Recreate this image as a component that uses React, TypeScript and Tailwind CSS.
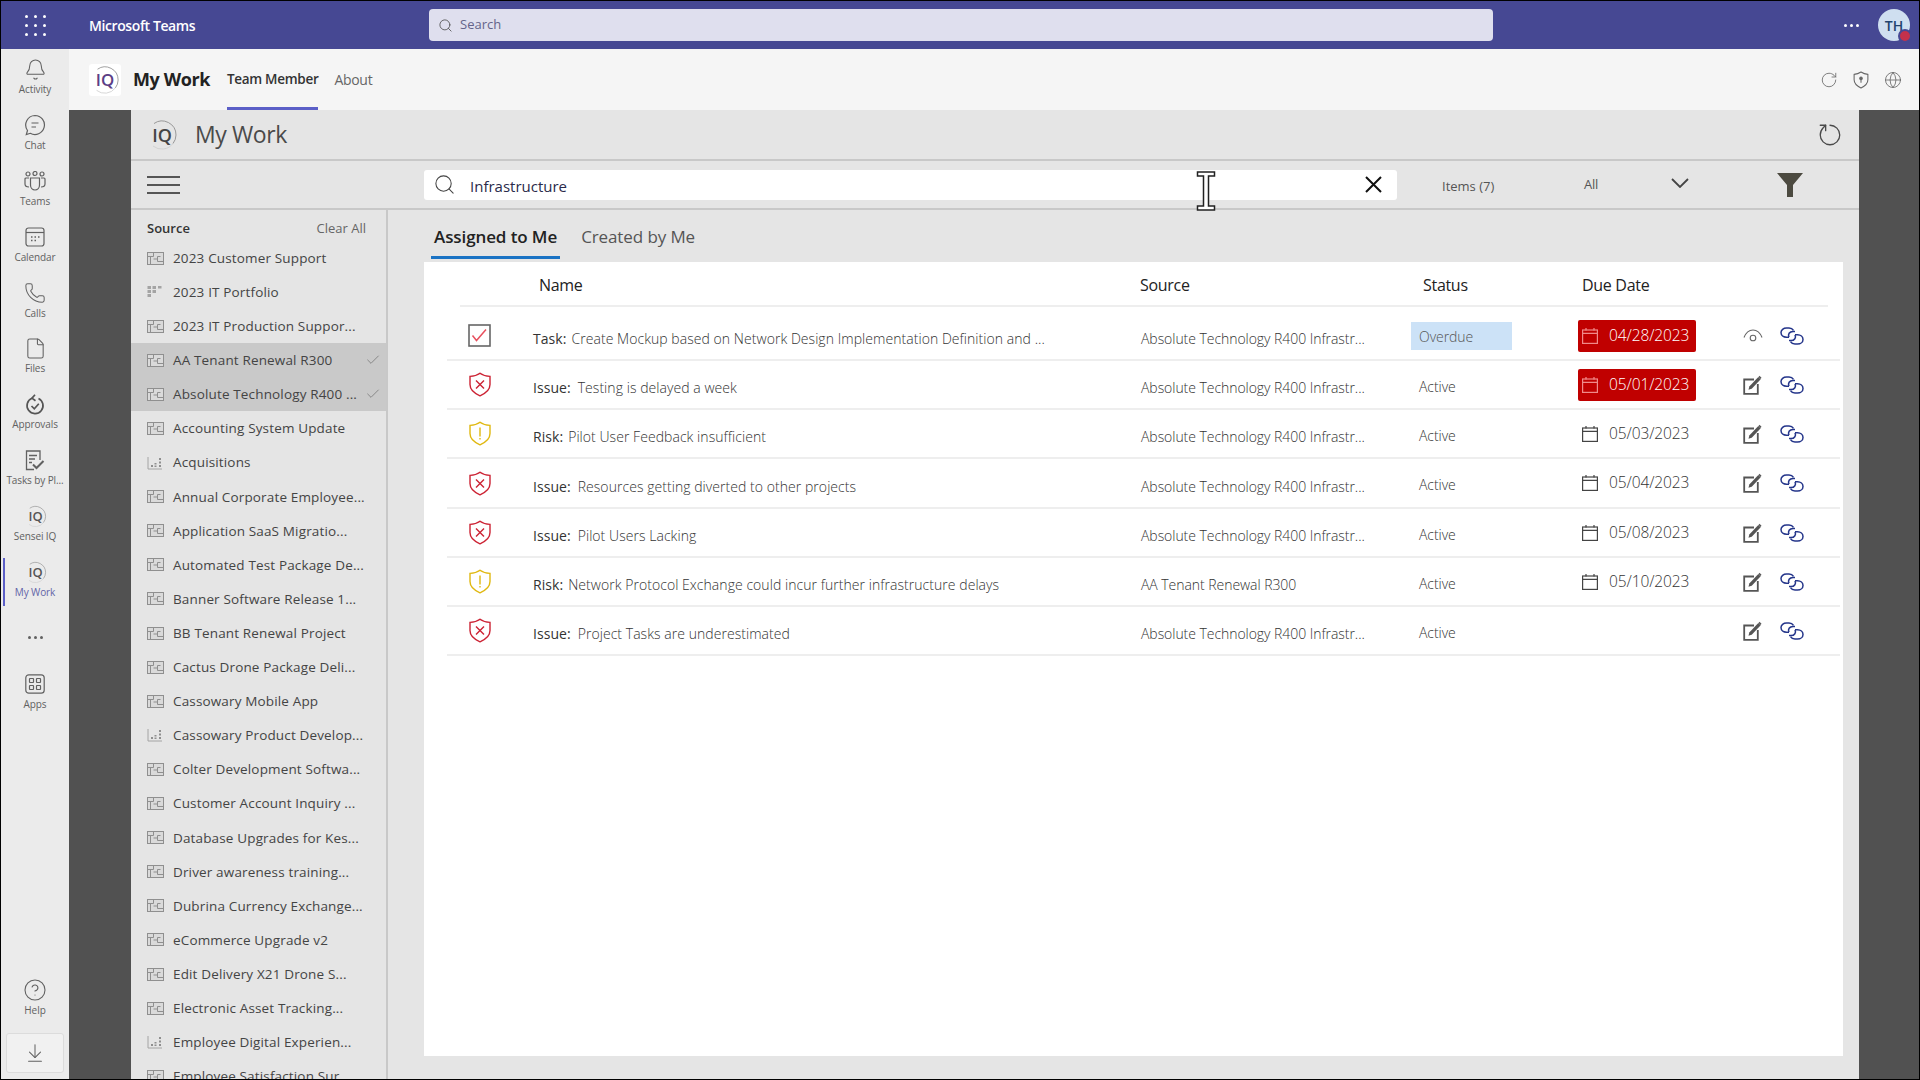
import { ArrowDownToLine, Bell, Check, CircleHelp, File, Globe, Phone, RotateCw, Search } from 'lucide-react';

const sources: { name: string; kind?: 'road' | 'chart'; selected?: boolean }[] = [
  { name: '2023 Customer Support' },
  { name: '2023 IT Portfolio', kind: 'road' },
  { name: '2023 IT Production Suppor...' },
  { name: 'AA Tenant Renewal R300', selected: true },
  { name: 'Absolute Technology R400 ...', selected: true },
  { name: 'Accounting System Update' },
  { name: 'Acquisitions', kind: 'chart' },
  { name: 'Annual Corporate Employee...' },
  { name: 'Application SaaS Migratio...' },
  { name: 'Automated Test Package De...' },
  { name: 'Banner Software Release 1...' },
  { name: 'BB Tenant Renewal Project' },
  { name: 'Cactus Drone Package Deli...' },
  { name: 'Cassowary Mobile App' },
  { name: 'Cassowary Product Develop...', kind: 'chart' },
  { name: 'Colter Development Softwa...' },
  { name: 'Customer Account Inquiry ...' },
  { name: 'Database Upgrades for Kes...' },
  { name: 'Driver awareness training...' },
  { name: 'Dubrina Currency Exchange...' },
  { name: 'eCommerce Upgrade v2' },
  { name: 'Edit Delivery X21 Drone S...' },
  { name: 'Electronic Asset Tracking...' },
  { name: 'Employee Digital Experien...', kind: 'chart' },
  { name: 'Employee Satisfaction Sur...' },
];

const SRC = 'Absolute Technology R400 Infrastr...';

const rows = [
  { type: 'task', label: 'Task:', title: 'Create Mockup based on Network Design Implementation Definition and ...', source: SRC, status: 'Overdue', due: '04/28/2023', late: true, h: 'h-[54px] pt-[5px]' },
  { type: 'issue', label: 'Issue:', title: 'Testing is delayed a week', source: SRC, status: 'Active', due: '05/01/2023', late: true, h: 'h-[49px]' },
  { type: 'risk', label: 'Risk:', title: 'Pilot User Feedback insufficient', source: SRC, status: 'Active', due: '05/03/2023', h: 'h-[49px]' },
  { type: 'issue', label: 'Issue:', title: 'Resources getting diverted to other projects', source: SRC, status: 'Active', due: '05/04/2023', h: 'h-[50px]' },
  { type: 'issue', label: 'Issue:', title: 'Pilot Users Lacking', source: SRC, status: 'Active', due: '05/08/2023', h: 'h-[49px]' },
  { type: 'risk', label: 'Risk:', title: 'Network Protocol Exchange could incur further infrastructure delays', source: 'AA Tenant Renewal R300', status: 'Active', due: '05/10/2023', h: 'h-[49px]' },
  { type: 'issue', label: 'Issue:', title: 'Project Tasks are underestimated', source: SRC, status: 'Active', due: '', h: 'h-[49px]' },
];

function IqLogo({ size, color }: { size: number; color: string }) {
  return (
    <svg width={size} height={size} viewBox="0 0 32 32">
      <path d="M8 4.500A14 14 0 0 1 30 16a14 14 0 0 1-3 8.500" fill="none" stroke="#8f8f8f" strokeWidth="0.9" />
      <path d="M27 24.500A14 14 0 0 1 7 27" fill="none" stroke="#cfcfcf" strokeWidth="0.9" />
      <text x="16" y="22.500" textAnchor="middle" fontSize="18" fontWeight="600" fontFamily="Open Sans, sans-serif" fill={color}>IQ</text>
    </svg>
  );
}

function SourceIcon({ kind }: { kind?: 'road' | 'chart' }) {
  if (kind === 'road') {
    return (
      <svg width="16" height="14" viewBox="0 0 16 14" fill="#a4a4a4">
        <rect x="0.5" y="1" width="3.5" height="3" /><rect x="5.5" y="1" width="3.5" height="3" /><rect x="11" y="1" width="3.5" height="2.5" />
        <rect x="0.5" y="5" width="3.5" height="3" /><rect x="5.5" y="5" width="3.5" height="3" />
        <rect x="0.5" y="9" width="3.5" height="3" />
      </svg>
    );
  }
  if (kind === 'chart') {
    return (
      <svg width="16" height="14" viewBox="0 0 16 14" fill="#8f8f8f">
        <path d="M1 1v12h14" fill="none" stroke="#a4a4a4" strokeWidth="1" />
        <rect x="4" y="9" width="2" height="2" /><rect x="7.5" y="7" width="2" height="1.5" /><rect x="7.5" y="9.5" width="2" height="1.5" />
        <rect x="12" y="2" width="2" height="2" /><rect x="12" y="5.5" width="2" height="2" /><rect x="12" y="9" width="2" height="2" />
      </svg>
    );
  }
  return (
    <svg width="17" height="13" viewBox="0 0 17 13" fill="none" stroke="#8f8f8f" strokeWidth="1">
      <rect x="0.5" y="0.5" width="16" height="12" fill="#dadada" />
      <path d="M0.5 4.5h6M3.5 4.5v8M6.5 0.5v4M6.5 7h4M10.5 4.5v5M10.5 9.5h6M10.5 4.5h3" />
    </svg>
  );
}

function Shield({ type }: { type: string }) {
  const c = type === 'issue' ? '#cc2233' : '#e0b810';
  return (
    <svg width="24" height="25" viewBox="0 0 24 25" fill="none" stroke={c} strokeWidth="1.4">
      <path d="M12 1.2c2.6 2 5.6 3 10 3.2v8.2c0 5-4.2 8.8-10 11.2-5.8-2.4-10-6.2-10-11.2V4.4c4.4-.2 7.4-1.2 10-3.2z" />
      {type === 'issue' ? (
        <path d="M8 8.5l8 8M16 8.5l-8 8" />
      ) : (
        <path d="M12 6.5v9M12 17v1.6" />
      )}
    </svg>
  );
}

function TaskBox() {
  return (
    <svg width="23" height="23" viewBox="0 0 23 23" fill="none">
      <rect x="1" y="1" width="21" height="21" stroke="#666" strokeWidth="1.6" fill="#fff" />
      <path d="M4.5 11.5l4 5L18 5.5" stroke="#e8505e" strokeWidth="1.5" />
    </svg>
  );
}

function CalIcon({ color }: { color: string }) {
  return (
    <svg width="16" height="16" viewBox="0 0 16 16" fill="none" stroke={color} strokeWidth="1.2">
      <rect x="0.6" y="2" width="14.8" height="13.4" />
      <path d="M0.6 5.4h14.8M4 0v2.4M12 0v2.4" />
    </svg>
  );
}

function LinkIcon() {
  return (
    <svg width="24" height="18" viewBox="0 0 24 18" fill="none" stroke="#24358a" strokeWidth="1.5">
      <path d="M13.5 3.4C12.6 1.9 11 1 9 1H6.5C3.4 1 1 3 1 5.6s2.4 4.6 5.5 4.6H9" />
      <path d="M10.5 14.6c.9 1.5 2.5 2.4 4.5 2.4h2.5c3.1 0 5.5-2 5.5-4.6s-2.4-4.6-5.5-4.6H15" />
      <path d="M9 10.2c-1.400-2.800.4-5.800 4-5.800h2M15 7.800c1.400 2.800-.4 5.800-4 5.800H9" />
    </svg>
  );
}

function EditIcon() {
  return (
    <svg width="19" height="20" viewBox="0 0 19 20" fill="none">
      <path d="M11 4.500H1.200v14.300h13.600V9" stroke="#555" strokeWidth="1.800" />
      <path d="M5.500 14.800l.8-3.300 9-9.500 2.400 2.300-9 9.500z" fill="#555" />
      <path d="M16.500 0.800l2 2-1 1.100-2-2z" fill="#555" />
    </svg>
  );
}

function EyeIcon() {
  return (
    <svg width="20" height="14" viewBox="0 0 20 14" fill="none" stroke="#666" strokeWidth="1.1">
      <path d="M1 8.500C3 3.500 6.500 1 10 1s7 2.500 9 7.500" />
      <circle cx="10" cy="9" r="2.800" />
    </svg>
  );
}

function RailGlyph({ name }: { name: string }) {
  const stroke = { stroke: '#616161', strokeWidth: 1.2, fill: 'none' };
  switch (name) {
    case 'Activity':
      return <Bell size={23} strokeWidth={1.1} className="text-[#616161]" />;
    case 'Chat':
      return (
        <svg width="22" height="22" viewBox="0 0 22 22" {...stroke}>
          <path d="M11 1.500a9.500 9.500 0 1 1-4.700 17.800l-4 1.200 1.200-4A9.500 9.500 0 0 1 11 1.500z" />
          <path d="M7.500 9h7M7.500 13h4.500" />
        </svg>
      );
    case 'Teams':
      return (
        <svg width="22" height="20" viewBox="0 0 22 20" {...stroke}>
          <circle cx="4" cy="3" r="2" /><circle cx="11" cy="2.500" r="2" /><circle cx="18" cy="3" r="2" />
          <path d="M6.500 7h9v7c0 3-2 5-4.500 5s-4.500-2-4.500-5z" />
          <path d="M5 7H2a1 1 0 0 0-1 1v5c0 2 1.500 3 4 3M17 7h3a1 1 0 0 1 1 1v5c0 2-1.500 3-4 3" />
        </svg>
      );
    case 'Calendar':
      return (
        <svg width="20" height="20" viewBox="0 0 20 20" {...stroke}>
          <rect x="1" y="1" width="18" height="18" rx="2.500" />
          <path d="M1 5.500h18" />
          <path d="M6 10h1.500M9.500 10H11M13 10h1.500M6 13.500h1.500M9.500 13.500H11" strokeWidth="1.500" />
        </svg>
      );
    case 'Calls':
      return <Phone size={22} strokeWidth={1.1} className="text-[#616161]" />;
    case 'Files':
      return <File size={23} strokeWidth={1.1} className="text-[#616161]" />;
    case 'Approvals':
      return (
        <svg width="20" height="21" viewBox="0 0 20 21" fill="none" stroke="#555" strokeWidth="1.700">
          <path d="M7 4.200a8 8 0 1 0 6.500.2" />
          <path d="M10 0.800L7 4.200l3.500 2.500" />
          <path d="M6.500 12l2.800 2.800 4.500-5" />
        </svg>
      );
    case 'Tasks by Pl...':
      return (
        <svg width="20" height="21" viewBox="0 0 20 21" fill="none" stroke="#616161" strokeWidth="1.300">
          <path d="M9 19.500H1.500V1h13.500v9" />
          <path d="M4 5.500h8M4 9h6M4 12.500h3" />
          <path d="M8 14.500l3.500 3.500 7-7" strokeWidth="2" />
        </svg>
      );
    case 'Apps':
      return (
        <svg width="20" height="20" viewBox="0 0 20 20" {...stroke}>
          <rect x="0.800" y="0.800" width="18.400" height="18.400" rx="3" />
          <rect x="4.500" y="4.500" width="4" height="4" rx="0.500" /><rect x="11.500" y="4.500" width="4" height="4" rx="0.500" />
          <rect x="4.500" y="11.500" width="4" height="4" rx="0.500" /><rect x="11.500" y="11.500" width="4" height="4" rx="0.500" />
        </svg>
      );
    default:
      return <IqLogo size={23} color="#555" />;
  }
}

function RailItem({ name, active }: { name: string; active?: boolean }) {
  return (
    <div className="relative flex h-[55.9px] flex-col items-center justify-start pt-[8px]">
      {active && <div className="absolute left-[2px] top-[6px] h-12 w-[2px] bg-[#5b5fc7]" />}
      <div className="flex h-[24px] items-center justify-center">
        <RailGlyph name={name} />
      </div>
      <span className={`mt-[1px] text-[10px] leading-[14px] tracking-[-0.1px] ${active ? 'text-[#6264a7]' : 'text-[#616161]'}`}>{name}</span>
    </div>
  );
}

function Dots({ color }: { color: string }) {
  return (
    <div className="flex gap-[3px]">
      {[0, 1, 2].map((i) => (
        <div key={i} className={`h-[3px] w-[3px] rounded-full ${color}`} />
      ))}
    </div>
  );
}

function DotsGrid() {
  return (
    <div className="grid w-fit grid-cols-3 gap-[6px]">
      {[0, 1, 2, 3, 4, 5, 6, 7, 8].map((i) => (
        <div key={i} className="h-[3px] w-[3px] rounded-full bg-white" />
      ))}
    </div>
  );
}

export default function App() {
  return (
    <div className="relative flex h-[1080px] w-[1920px] flex-col overflow-hidden border border-black bg-[#515151] font-['Open_Sans',sans-serif]">
      {/* Teams top bar */}
      <div className="flex h-[48px] shrink-0 items-center bg-[#464893]">
        <div className="ml-[24px] w-[64px]"><DotsGrid /></div>
        <span className="w-[340px] text-[14px] font-semibold tracking-[-0.4px] text-white">Microsoft Teams</span>
        <div className="flex h-[32px] w-[1064px] items-center gap-[7px] rounded-[4px] bg-[#dfdfee] pl-[9px]">
          <Search size={15} strokeWidth={1.4} className="text-[#555]" />
          <span className="text-[13px] text-[#64648a]">Search</span>
        </div>
        <div className="ml-[351px]"><Dots color="bg-white" /></div>
        <div className="relative ml-[19px] flex h-8 w-8 items-center justify-center rounded-full bg-[#cfdff0] text-[14px] font-semibold text-[#22446e]">
          TH
          <div className="absolute -bottom-[2px] -right-[2px] h-[14px] w-[14px] rounded-full border-2 border-[#464893] bg-[#c4314b]" />
        </div>
      </div>

      <div className="flex min-h-0 flex-1">
        {/* Teams rail */}
        <div className="flex w-[68px] shrink-0 flex-col bg-[#ebebeb]">
          <RailItem name="Activity" />
          <RailItem name="Chat" />
          <RailItem name="Teams" />
          <RailItem name="Calendar" />
          <RailItem name="Calls" />
          <RailItem name="Files" />
          <RailItem name="Approvals" />
          <RailItem name="Tasks by Pl..." />
          <RailItem name="Sensei IQ" />
          <RailItem name="My Work" active />
          <div className="mb-px mt-[5px] flex h-[50px] items-center justify-center"><Dots color="bg-[#616161]" /></div>
          <RailItem name="Apps" />
          <div className="flex-1" />
          <div className="flex flex-col items-center pb-[16px] text-[#616161]">
            <CircleHelp size={24} strokeWidth={1.1} />
            <span className="mt-[1px] text-[10px] leading-[14px]">Help</span>
          </div>
          <div className="mx-[5px] mb-[6px] flex h-[40px] items-center justify-center rounded-[3px] border border-[#dcdcdc] bg-[#f1f1f1]">
            <ArrowDownToLine size={22} strokeWidth={1.1} className="text-[#616161]" />
          </div>
        </div>

        <div className="flex min-w-0 flex-1 flex-col">
          {/* Tab header */}
          <div className="flex h-[61px] shrink-0 items-center bg-[#f5f5f5]">
            <div className="ml-[20px] flex h-[32px] w-[32px] items-center justify-center rounded-[3px] bg-white">
              <IqLogo size={30} color="#5c3f86" />
            </div>
            <span className="ml-[12px] text-[18px] font-bold tracking-[-0.4px] text-[#222]">My Work</span>
            <div className="ml-[17px] flex h-full flex-col items-center justify-center border-b-[3px] border-[#5b5fc7] pt-[3px]">
              <span className="text-[13.5px] font-semibold tracking-[-0.3px] text-[#333]">Team Member</span>
            </div>
            <span className="ml-[16px] text-[14px] tracking-[-0.3px] text-[#666]">About</span>
            <div className="ml-auto mr-[17px] flex items-center gap-[14px] text-[#666]">
              <RotateCw size={18} strokeWidth={1.1} />
              <svg width="18" height="18" viewBox="0 0 16 17" fill="none" stroke="#666" strokeWidth="1">
                <path d="M8 1c2 1.300 4 2 6.500 2.200v5c0 3.500-2.800 6-6.500 7.800-3.700-1.800-6.500-4.300-6.500-7.800v-5C4 3 6 2.300 8 1z" />
                <circle cx="8" cy="7" r="1.200" fill="#666" /><path d="M8 8v3" />
              </svg>
              <Globe size={18} strokeWidth={1.1} />
            </div>
          </div>

          {/* Embedded app */}
          <div className="ml-[62px] flex min-h-0 w-[1728px] flex-1 flex-col bg-[#e5e5e5]">
            <div className="flex h-[51px] shrink-0 items-center border-b-2 border-[#c8c8c8] pl-[15px] pr-[16px]">
              <IqLogo size={32} color="#444" />
              <span className="ml-[17px] text-[23px] leading-none tracking-[-0.4px] text-[#4a4a4a]">My Work</span>
              <RotateCw size={26} strokeWidth={1.2} className="ml-auto -rotate-90 text-[#4a4a4a]" />
            </div>

            <div className="flex h-[49px] shrink-0 items-center border-b-2 border-[#c8c8c8]">
              <div className="ml-[16px] flex w-[33px] flex-col gap-[6px]">
                <div className="h-[2px] bg-[#555]" /><div className="h-[2px] bg-[#555]" /><div className="h-[2px] bg-[#555]" />
              </div>
              <div className="ml-[244px] flex h-[30px] w-[973px] items-center rounded-[3px] bg-white pl-[9px] pr-[15px]">
                <Search size={23} strokeWidth={1.1} className="text-[#444]" />
                <span className="ml-[14px] pt-[3px] text-[15px] text-[#2a2a4a]">Infrastructure</span>
                <svg className="ml-auto" width="17" height="17" viewBox="0 0 17 17" fill="none" stroke="#111" strokeWidth="2">
                  <path d="M1 1l15 15M16 1L1 16" />
                </svg>
              </div>
              <span className="ml-[45px] w-[142px] pt-[4px] text-[13px] text-[#555]">Items (7)</span>
              <span className="w-[87px] text-[13px] tracking-[-0.3px] text-[#555]">All</span>
              <svg className="-mt-[4px]" width="18" height="10" viewBox="0 0 18 10" fill="none" stroke="#444" strokeWidth="1.800">
                <path d="M1 1l8 8 8-8" />
              </svg>
              <svg className="ml-[88px] mt-px" width="26" height="24" viewBox="0 0 26 24" fill="#4c4a40">
                <path d="M0 0h26L16 12v12h-6V12z" />
              </svg>
            </div>

            <div className="flex min-h-0 flex-1">
              {/* Source filter list */}
              <div className="w-[257px] shrink-0 overflow-hidden border-r-2 border-[#c8c8c8]">
                <div className="flex h-[31px] items-end justify-between pb-[3px] pl-[16px] pr-[20px] text-[13px]">
                  <span className="font-semibold text-[#333]">Source</span>
                  <span className="text-[#666]">Clear All</span>
                </div>
                {sources.map((s) => (
                  <div key={s.name} className={`flex h-[34.1px] items-center pl-[16px] text-[13.5px] tracking-[0.15px] text-[#444] ${s.selected ? 'bg-[#c9c9c9]' : ''}`}>
                    <div className="flex w-[26px] justify-start"><SourceIcon kind={s.kind} /></div>
                    <span className="whitespace-nowrap">{s.name}</span>
                    {s.selected && <Check size={16} strokeWidth={1} className="ml-auto mr-[5px] shrink-0 text-[#666]" />}
                  </div>
                ))}
              </div>

              {/* Work list */}
              <div className="flex min-w-0 flex-1 flex-col">
                <div className="flex h-[52px] shrink-0 pl-[43px] pt-[13px] text-[17px] leading-[28px] tracking-[-0.1px]">
                  <div className="flex h-[36px] flex-col border-b-[3px] border-[#1a73c4] px-[3px] font-semibold text-[#222]">Assigned to Me</div>
                  <div className="ml-[21px] text-[#555]">Created by Me</div>
                </div>
                <div className="ml-[36px] mb-[23px] flex w-[1419px] flex-1 flex-col bg-white pl-[23px]">
                  <div className="ml-[13px] grid h-[45px] w-[1368px] grid-cols-[79px_601px_283px_159px_1fr] items-center border-b-2 border-[#eeeeee] pt-[2px] text-[16px] tracking-[-0.3px] text-[#222]">
                    <span />
                    <span>Name</span>
                    <span>Source</span>
                    <span>Status</span>
                    <span>Due Date</span>
                  </div>
                  {rows.map((r, i) => (
                    <div key={i} className={`grid w-[1393px] grid-cols-[86px_608px_270px_167px_152px_1fr] items-center border-b-2 border-[#eeeeee] text-[14px] font-light tracking-[-0.05px] text-[#333] ${r.h}`}>
                      <div className="flex justify-start pl-[21px]">
                        {r.type === 'task' ? <TaskBox /> : <Shield type={r.type} />}
                      </div>
                      <div className="whitespace-nowrap pt-[6px] tracking-[0.05px]">
                        <span className="font-normal">{r.label}</span>
                        <span className={r.type === 'issue' ? 'ml-[7px]' : 'ml-[5px]'}>{r.title}</span>
                      </div>
                      <div className="whitespace-nowrap pt-[6px]">{r.source}</div>
                      <div>
                        {r.status === 'Overdue' ? (
                          <div className="flex h-[28px] w-[101px] items-center bg-[#cce2f7] pl-[8px] pt-px text-[#555]">Overdue</div>
                        ) : (
                          <div className="pl-[8px] pt-[3px]">Active</div>
                        )}
                      </div>
                      <div>
                        {r.due && (
                          <div className={`flex h-[32px] w-[118px] items-center gap-[11px] rounded-[2px] pl-[4px] text-[15.5px] tracking-[-0.1px] ${r.late ? 'bg-[#c00000] text-white' : 'text-[#333]'}`}>
                            <CalIcon color={r.late ? '#f08a8a' : '#444'} />
                            {r.due}
                          </div>
                        )}
                      </div>
                      <div className="flex items-center pl-[13px]">
                        <div className="flex w-[37px] justify-start">{i === 0 ? <EyeIcon /> : <EditIcon />}</div>
                        <LinkIcon />
                      </div>
                    </div>
                  ))}
                </div>
              </div>
            </div>
          </div>
        </div>
      </div>

      {/* text cursor caught in the capture */}
      <svg className="absolute left-[1195px] top-[170px]" width="20" height="40" viewBox="0 0 20 40" fill="#fff" stroke="#222" strokeWidth="1.5">
        <path d="M1.500 1h17v4h-6v30h6v4h-17v-4h6V5h-6z" />
      </svg>
    </div>
  );
}
